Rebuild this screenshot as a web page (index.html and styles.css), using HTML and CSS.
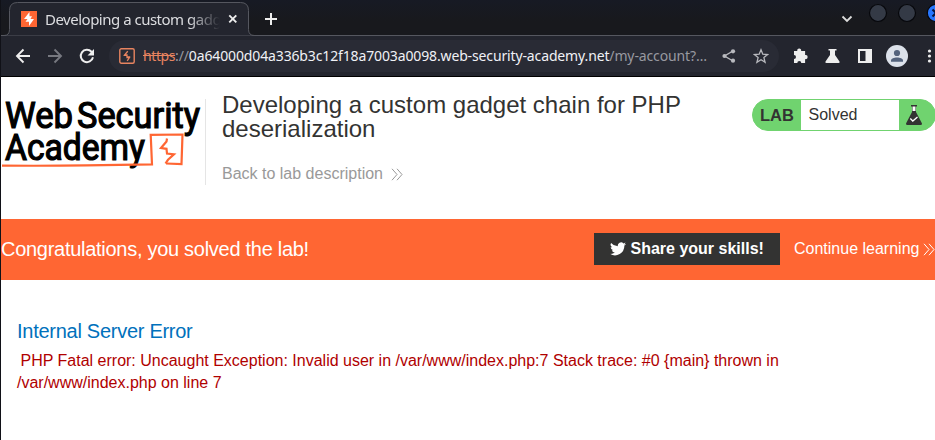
FILE: index.html
```html
<!DOCTYPE html>
<html lang="en">
<head>
<meta charset="utf-8">
<title>Developing a custom gadget chain for PHP deserialization</title>
<link rel="stylesheet" href="styles.css">
</head>
<body>
<div class="window">
  <header class="tabstrip">
    <div class="tab">
      <svg class="tab-outline" width="264" height="36" viewBox="0 0 264 36"><path d="M0 35.5H4Q9.500 35.500 9.500 29.500V10.500Q9.500 2.500 17.500 2.500H240.500Q248.500 2.500 248.500 10.500V29.500Q248.500 35.500 254.500 35.500H264" fill="#23252e" stroke="#55575f"/></svg>
      <svg class="favicon" width="16" height="16" viewBox="0 0 16 16"><path d="M0 0h16v16H0z" fill="#ff6633"/><path d="M8.500 1v4.200H11L9.500 8H13L8 15v-4.200H4.500L6.500 8H3z" fill="#fff"/></svg>
      <span class="tab-title">Developing a custom gadg</span>
      <svg class="tab-close" width="10" height="10" viewBox="0 0 10 10"><path d="M1.300 1.300l7 7m0-7l-7 7" stroke="#eee" stroke-width="1.900"/></svg>
    </div>
    <svg class="new-tab" width="14" height="14" viewBox="0 0 14 14"><path d="M7 1v12M1 7h12" stroke="#eee" stroke-width="2"/></svg>
    <svg class="window-controls" width="100" height="30" viewBox="0 0 100 30"><path d="M7.500 16.500l4.500 4.500 4.500-4.500" fill="none" stroke="#ddd" stroke-width="1.800"/><g stroke="#07080c" stroke-width="1.200"><circle cx="43" cy="13" r="8.500" fill="#343a46"/><circle cx="72" cy="13" r="8.500" fill="#343a46"/><circle cx="101" cy="13" r="8.700" fill="#2777ff"/></g><path d="M97.500 9.500l7 7m0-7l-7 7" stroke="#07143a" stroke-width="2"/></svg>
  </header>
  <nav class="toolbar">
    <svg class="nav-icons" width="80" height="16" viewBox="0 0 80 16" fill="none" stroke-width="1.900"><path d="M15 8H2m6.500-6.500L2 8l6.500 6.500" stroke="#eee"/><path d="M33 8h13m-6.500-6.500L46 8l-6.500 6.500" stroke="#777980"/><path d="M78 9.300A6.200 6.200 0 1 1 76.500 3.700l1 1" stroke="#eee" stroke-width="2"/><path d="M79 1v6.500H72.500z" fill="#eee"/></svg>
    <div class="address">
      <svg class="site-icon" width="16" height="16" viewBox="0 0 16 16" fill="none" stroke="#e88460"><rect x=".8" y=".8" width="14.400" height="14.400" rx="1.500" stroke-width="1.400"/><path d="M8.800 3.300L5.500 7H8v2m0-2.500v3h2.500l-2.300 3.300M5 7.300h3.300M8 9h3" stroke-width="1.300"/></svg>
      <span class="url"><s>https</s>://<b>0a64000d04a336b3c12f18a7003a0098.web-security-academy.net</b>/my-account?…</span>
      <svg class="share" width="14" height="14" viewBox="0 0 14 14" fill="#b8b9be"><path d="M11 2L2.500 7l8.500 5" fill="none" stroke="#b8b9be" stroke-width="1.400"/><circle cx="11" cy="2.300" r="2.100"/><circle cx="2.500" cy="7" r="2.100"/><circle cx="11" cy="11.700" r="2.100"/></svg>
      <svg class="star" width="16" height="16" viewBox="0 0 16 16"><path d="M8 1.800l1.800 4.400 4.800.3-3.700 3.100 1.200 4.700L8 11.700l-4.100 2.600 1.200-4.700L1.400 6.500l4.800-.3z" fill="none" stroke="#b8b9be" stroke-width="1.300"/></svg>
    </div>
    <svg class="tools" width="143" height="24" viewBox="0 0 143 24" fill="#eee"><path d="M2 7h3.300a2 2 0 1 1 3.800 0h4v4a2.100 2.100 0 1 1 0 4.100v4H9.300a2 2 0 1 0-4 0H2v-4a2 2 0 1 0 0-4z"/><path d="M36.500 5h8v1.500H43V11l4.500 6.500q.6 1.500-1 1.500h-12q-1.600 0-1-1.500L38 11V6.500h-1.500z"/><path d="M66 5h14v14H66zm2 2v10h5.500V7z" fill-rule="evenodd"/><circle cx="105" cy="12" r="11" fill="#dce1ea"/><circle cx="105" cy="9" r="3.100" fill="#53627c"/><path d="M99 17.800V16.500c0-4 12-4 12 0v1.300z" fill="#53627c"/><circle cx="137.500" cy="7" r="1.600"/><circle cx="137.500" cy="12" r="1.600"/><circle cx="137.500" cy="17" r="1.600"/></svg>
  </nav>
  <main class="page">
    <section class="lab-header">
      <svg class="logo" width="204" height="76" viewBox="0 0 204 76"><g fill="#000" stroke="#000" stroke-width="1.200"><text class="logo-text" x="4" y="31.500" textLength="68" lengthAdjust="spacingAndGlyphs">Web</text><text class="logo-text" x="76" y="31.500" textLength="123" lengthAdjust="spacingAndGlyphs">Security</text><text class="logo-text" x="4" y="63.500" textLength="140" lengthAdjust="spacingAndGlyphs">Academy</text></g><g fill="none" stroke="#ff6633"><path d="M1 69.600Q45 70 85 69.300T151 68.300L149.700 38.800 181.500 38.500 180.500 68 165 67.500" stroke-width="2.200"/><path d="M166 42.500l-.5 3-5.500 6.500 5.500.8.500 4.700 7 .8-6 5.500-2.500 3.700" stroke-width="2.200"/></g></svg>
      <div class="heading">
        <h1>Developing a custom gadget chain for PHP deserialization</h1>
        <a class="back">Back to lab description <svg width="12" height="13" viewBox="0 0 12 13"><path d="M1 .8l5 5.700-5 5.700M6 .8l5 5.700-5 5.700" fill="none" stroke="currentColor"/></svg></a>
      </div>
      <div class="status">
        <strong>LAB</strong><span>Solved</span>
        <svg width="16" height="20" viewBox="0 0 16 20"><path d="M5 0h6v1.500h-1V7l6 11.500q0 1.500-1.200 1.500H1.200Q0 20 0 18.500L6 7V1.500H5z" fill="#333332"/><path d="M6.500 1.500h3V6h-3z" fill="#fff"/><path d="M4.300 13.500l2.500 2.500 4.700-4" fill="none" stroke="#fff" stroke-width="1.300"/></svg>
      </div>
    </section>
    <section class="banner">
      <h2>Congratulations, you solved the lab!</h2>
      <button class="skills"><svg width="16" height="14" viewBox="0 0 24 20"><path fill="#fff" d="M24 2.400a10 10 0 0 1-2.800.8A5 5 0 0 0 23.300.4a10 10 0 0 1-3.100 1.200A4.900 4.900 0 0 0 11.800 6 14 14 0 0 1 1.700.9a4.900 4.900 0 0 0 1.500 6.600A5 5 0 0 1 1 6.900a4.900 4.900 0 0 0 3.900 4.900 5 5 0 0 1-2.200.1 4.900 4.900 0 0 0 4.600 3.400A9.900 9.900 0 0 1 0 17.300a14 14 0 0 0 21.500-12.400A10 10 0 0 0 24 2.400z"/></svg><span>Share your skills!</span></button>
      <a class="continue"><span>Continue learning</span><svg width="12" height="13" viewBox="0 0 12 13"><path d="M1 .8l5 5.700-5 5.700M6 .8l5 5.700-5 5.700" fill="none" stroke="currentColor"/></svg></a>
    </section>
    <section class="error">
      <h3>Internal Server Error</h3>
      <p>PHP Fatal error: Uncaught Exception: Invalid user in /var/www/index.php:7 Stack trace: #0 {main} thrown in /var/www/index.php on line 7</p>
    </section>
  </main>
</div>
</body>
</html>
```

FILE: styles.css
```css
* { box-sizing: border-box; }
body { margin: 0; overflow: hidden; background: #fff; font-family: "Liberation Sans", Arial, sans-serif; }
svg { display: block; flex: none; }
.window { width: 935px; height: 440px; overflow: hidden; border-left: 1px solid #101117; }
.tabstrip { height: 36px; display: flex; align-items: flex-start; background: linear-gradient(#171a24, #18191d 60%); border-bottom: 1px solid #55575f; }
.tab { position: relative; width: 248px; height: 36px; display: flex; align-items: center; padding: 2px 10px 0 20px; margin-bottom: -1px; }
.tab-outline { position: absolute; left: -1px; top: 0; }
.favicon, .tab-title, .tab-close { position: relative; }
.tab-title { width: 175px; margin-left: 8px; overflow: hidden; white-space: nowrap; font: 15px/20px "Noto Sans", sans-serif; letter-spacing: -.5px; color: #dcdde0; mask-image: linear-gradient(90deg, #000 82%, transparent); }
.tab-close { margin-left: 8px; }
.new-tab { margin: 12px 0 0 15px; }
.window-controls { margin-left: auto; }
.toolbar { height: 41px; display: flex; align-items: center; padding-left: 14px; background: #23252e; border-bottom: 1px solid #000; }
.address { width: 670px; height: 32px; margin-left: 14px; padding: 0 10px; display: flex; align-items: center; border-radius: 16px; background: #292b35; }
.url { width: 567px; margin-left: 8px; white-space: nowrap; font: 14px/20px "Noto Sans", sans-serif; letter-spacing: -.13px; color: #9899a0; }
.url s { color: #e88460; letter-spacing: -.4px; }
.url b { font-weight: 400; letter-spacing: -.135px; color: #f0f1f5; }
.share { margin-left: 12px; }
.star { margin-left: 17px; }
.tools { margin-left: 13px; }
.page { height: 363px; }
.lab-header { height: 142px; display: flex; align-items: flex-start; padding-top: 22px; }
.logo { margin-top: -3px; }
.logo-text { font: 400 36px Roboto, sans-serif; }
.heading { width: 530px; height: 86px; flex: none; padding: 0 0 0 16px; border-left: 1px solid #e5e5e5; }
h1, h2, h3, p { margin: 0; font-weight: 400; }
h1 { width: 480px; margin-top: -6px; font-size: 24px; line-height: 24px; color: #333332; }
.back { display: flex; align-items: center; gap: 8px; margin-top: 23px; font-size: 16px; line-height: 20px; color: #999; }
.status { width: 184px; height: 32px; margin-left: 17px; flex: none; display: flex; align-items: center; border: 1px solid #70d36f; border-radius: 16px; background: #70d36f; color: #333332; }
.status strong { width: 48px; padding-left: 7px; font-size: 16.5px; }
.status span { width: 98px; height: 30px; padding-left: 7.5px; background: #fff; font-size: 16px; line-height: 30px; }
.status svg { margin-left: 7px; }
.banner { height: 61px; display: flex; align-items: center; background: #ff6633; color: #fff; }
.banner h2 { width: 593px; flex: none; font-size: 20px; letter-spacing: -.28px; }
.skills { width: 186px; height: 32px; flex: none; display: flex; align-items: center; margin-top: -1px; padding: 0 0 0 16px; gap: 4.500px; border: 0; background: #333332; color: #fff; font: bold 16px "Liberation Sans", Arial, sans-serif; white-space: nowrap; }
.continue { display: flex; flex: none; align-items: center; gap: 4px; margin: -1px 0 0 14px; font-size: 16px; white-space: nowrap; }
.error { padding: 39px 16px 0; }
.error h3 { font-size: 20px; line-height: 24px; letter-spacing: -.27px; color: #0071bc; }
.error p { width: 810px; margin-top: 7px; text-indent: 3.500px; font-size: 16px; line-height: 22px; color: #b00000; }
```
